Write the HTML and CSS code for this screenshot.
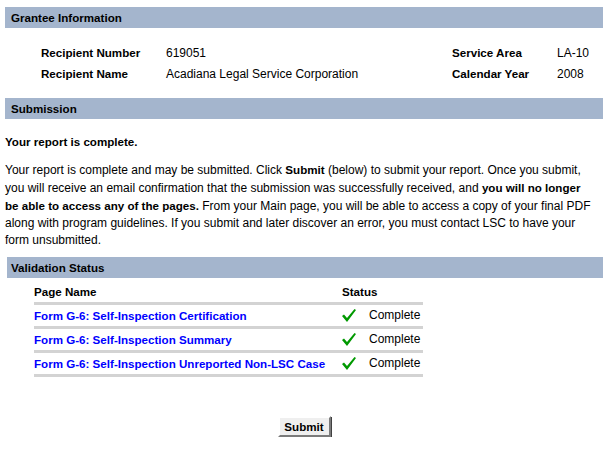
FILE: index.html
```html
<!DOCTYPE html>
<html>
<head>
<meta charset="utf-8">
<title>Submission</title>
<link rel="stylesheet" href="styles.css">
</head>
<body>
<div class="bar">Grantee Information</div>
<div class="info">
  <div class="lbl">Recipient Number</div>
  <div class="val">619051</div>
  <div class="lbl">Service Area</div>
  <div class="val">LA-10</div>
  <div class="lbl">Recipient Name</div>
  <div class="val">Acadiana Legal Service Corporation</div>
  <div class="lbl">Calendar Year</div>
  <div class="val">2008</div>
</div>
<div class="bar">Submission</div>
<p class="complete">Your report is complete.</p>
<p class="para">Your report is complete and may be submitted. Click <b>Submit</b> (below) to submit your report. Once you submit,<br>you will receive an email confirmation that the submission was successfully received, and <b>you will no longer</b><br><b>be able to access any of the pages.</b> From your Main page, you will be able to access a copy of your final PDF<br>along with program guidelines. If you submit and later discover an error, you must contact LSC to have your<br>form unsubmitted.</p>
<div class="bar bar-indent">Validation Status</div>
<div class="vtable">
  <div class="vrow vhead">
    <div class="cname">Page Name</div>
    <div class="cstatus">Status</div>
  </div>
  <div class="vrow">
    <div class="cname"><a href="#">Form G-6: Self-Inspection Certification</a></div>
    <div class="cstatus"><svg class="check" width="14" height="13" viewBox="0 0 14 13"><polygon points="0,7 2,5.5 5,9 12.5,0 14,1 5,13"/></svg><span>Complete</span></div>
  </div>
  <div class="vrow">
    <div class="cname"><a href="#">Form G-6: Self-Inspection Summary</a></div>
    <div class="cstatus"><svg class="check" width="14" height="13" viewBox="0 0 14 13"><polygon points="0,7 2,5.5 5,9 12.5,0 14,1 5,13"/></svg><span>Complete</span></div>
  </div>
  <div class="vrow">
    <div class="cname"><a href="#">Form G-6: Self-Inspection Unreported Non-LSC Case</a></div>
    <div class="cstatus"><svg class="check" width="14" height="13" viewBox="0 0 14 13"><polygon points="0,7 2,5.5 5,9 12.5,0 14,1 5,13"/></svg><span>Complete</span></div>
  </div>
</div>
<div class="actions"><button class="btn" type="button">Submit</button></div>
</body>
</html>
```
FILE: styles.css
```css
html, body {
  margin: 0;
  background: #fff;
}
body {
  padding: 7px 4px 0 5px;
  font-family: "Liberation Sans", Arial, sans-serif;
  font-size: 12px;
  color: #000;
}
.bar {
  background: #a4b5cd;
  height: 21px;
  line-height: 22px;
  padding-left: 6px;
  font-weight: bold;
  font-size: 11.6px;
}
.bar-indent {
  margin-left: 2px;
  padding-left: 4px;
}
.info {
  display: grid;
  grid-template-columns: 125px 286px 105px auto;
  grid-auto-rows: 21px;
  align-items: center;
  padding: 14px 0 14px 36px;
}
.lbl {
  font-weight: bold;
  font-size: 11.6px;
}
.complete {
  font-weight: bold;
  font-size: 11.6px;
  line-height: 17px;
  margin: 14px 0 11px;
}
.para {
  line-height: 17px;
  margin: 0 0 8px;
  white-space: nowrap;
}
.para b {
  font-size: 11.6px;
}
.vtable {
  margin-left: 29px;
  width: 389px;
}
.vrow {
  display: flex;
  align-items: center;
  height: 21px;
  line-height: 21px;
  border-bottom: 3px solid #d3d3d3;
}
.vrow + .vrow {
  padding-top: 0;
}
.vhead {
  height: 22px;
  padding-top: 2px;
  font-weight: bold;
  font-size: 11.6px;
}
.cname {
  width: 308px;
}
.cstatus {
  display: flex;
  align-items: center;
}
.check {
  fill: #009900;
  margin-right: 13px;
}
a {
  color: #0000ff;
  font-weight: bold;
  font-size: 11.6px;
  text-decoration: none;
}
.actions {
  display: flex;
  justify-content: center;
  margin-top: 39px;
}
.btn {
  font-family: "Liberation Sans", Arial, sans-serif;
  font-size: 11.6px;
  font-weight: bold;
  color: #000;
  background: #efefef;
  width: 53px;
  height: 21px;
  padding: 0;
  border: 2px solid;
  border-color: #fff #7a7a7a #7a7a7a #fff;
  box-shadow: 1px 1px 0 #404040;
}
```
